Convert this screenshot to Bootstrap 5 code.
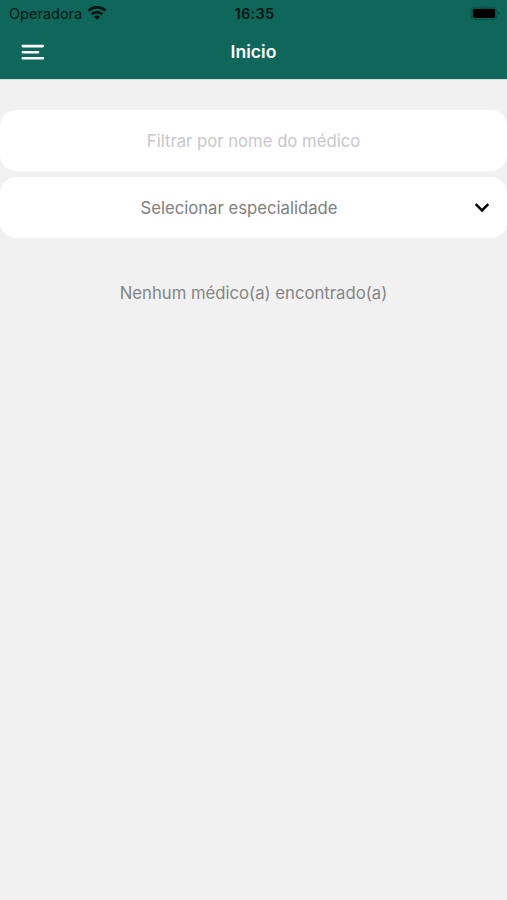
<!DOCTYPE html>
<html lang="pt-BR">
<head>
<meta charset="utf-8">
<meta name="viewport" content="width=device-width, initial-scale=1">
<title>Inicio</title>
<link href="https://cdn.jsdelivr.net/npm/bootstrap@5.3.0/dist/css/bootstrap.min.css" rel="stylesheet">
<style>
body { background: #f1f1f1; font-family: Inter, "Liberation Sans", sans-serif; font-size: 16.7px; min-height: 900px; }
.app-header { background: #0f665a; height: 79px; box-shadow: 0 1px 0 #d3dfdd; }
.status-bar { height: 27px; font-size: 14.5px; color: #021a16; padding-left: 9px; padding-right: 7px; }
.status-side { flex: 1 1 0; gap: 5px; }
.clock { font-weight: 600; color: #021512; font-size: 14.6px; letter-spacing: .25px; padding-top: 2px; }
.title-bar { height: 50px; padding: 0 21px; }
.page-title { font-size: 17.6px; font-weight: 600; padding-bottom: 1px; }
.field { height: 61px; border-radius: 16px; font-size: 16.7px; line-height: 24px; }
.field-input::placeholder { color: #c7c7c9; opacity: 1; }
.field-input:focus { box-shadow: none; }
.field-select { color: #808080; padding-left: 6px; padding-right: 15px; }
.fields { padding-top: 31px; gap: 6px; }
.empty-note { color: #858585; margin-top: 43px; line-height: 24px; }
</style>
<script src="https://cdn.jsdelivr.net/npm/bootstrap@5.3.0/dist/js/bootstrap.bundle.min.js" defer></script>
</head>
<body>
<header class="app-header">
  <div class="status-bar d-flex align-items-center">
    <div class="status-side d-flex align-items-center">
      <span>Operadora</span>
      <svg width="20" height="15" viewBox="0 0 20 15" fill="none" stroke="#021512">
        <path d="M1.4 4.8a12.2 12.2 0 0 1 17.2 0" stroke-width="2.8"/>
        <path d="M4.5 8.4a7.8 7.8 0 0 1 11 0" stroke-width="2.6"/>
        <path d="M10 13.8 6.9 10.9a4.4 4.4 0 0 1 6.2 0z" fill="#021512" stroke="none"/>
      </svg>
    </div>
    <span class="clock">16:35</span>
    <div class="status-side d-flex justify-content-end">
      <svg width="30" height="15" viewBox="0 0 30 15">
        <rect x="1.1" y="1.1" width="25.8" height="12.4" rx="3.8" fill="none" stroke="#0a5047"/>
        <rect x="2.8" y="2.7" width="22.4" height="9.2" rx="1.6" fill="#000"/>
        <path d="M28 5.3q1.6.6 1.6 2t-1.6 2z" fill="#0a5047"/>
      </svg>
    </div>
  </div>
  <nav class="title-bar d-flex align-items-center justify-content-between">
    <button class="btn p-0 border-0 d-flex" type="button" aria-label="Menu">
      <svg width="24" height="18" viewBox="0 0 24 18" stroke="#fff" stroke-width="2.6" stroke-linecap="round">
        <path d="M1.8 3.1h20.1M1.8 9.2h15.2M1.8 15.3h20.1"/>
      </svg>
    </button>
    <h1 class="page-title text-white m-0">Inicio</h1>
    <span class="px-2 mx-1"></span>
  </nav>
</header>
<main>
  <div class="fields d-flex flex-column">
    <input class="field field-input form-control border-0 bg-white text-center" type="text" placeholder="Filtrar por nome do médico">
    <div class="field field-select bg-white d-flex align-items-center" role="button">
      <span class="flex-grow-1 text-center">Selecionar especialidade</span>
      <svg width="20" height="16" viewBox="0 0 20 16" fill="none" stroke="#000" stroke-width="2.5"><path d="m3.7 4.2 6.3 6.2 6.3-6.2"/></svg>
    </div>
  </div>
  <p class="empty-note text-center mb-0">Nenhum médico(a) encontrado(a)</p>
</main>
</body>
</html>
